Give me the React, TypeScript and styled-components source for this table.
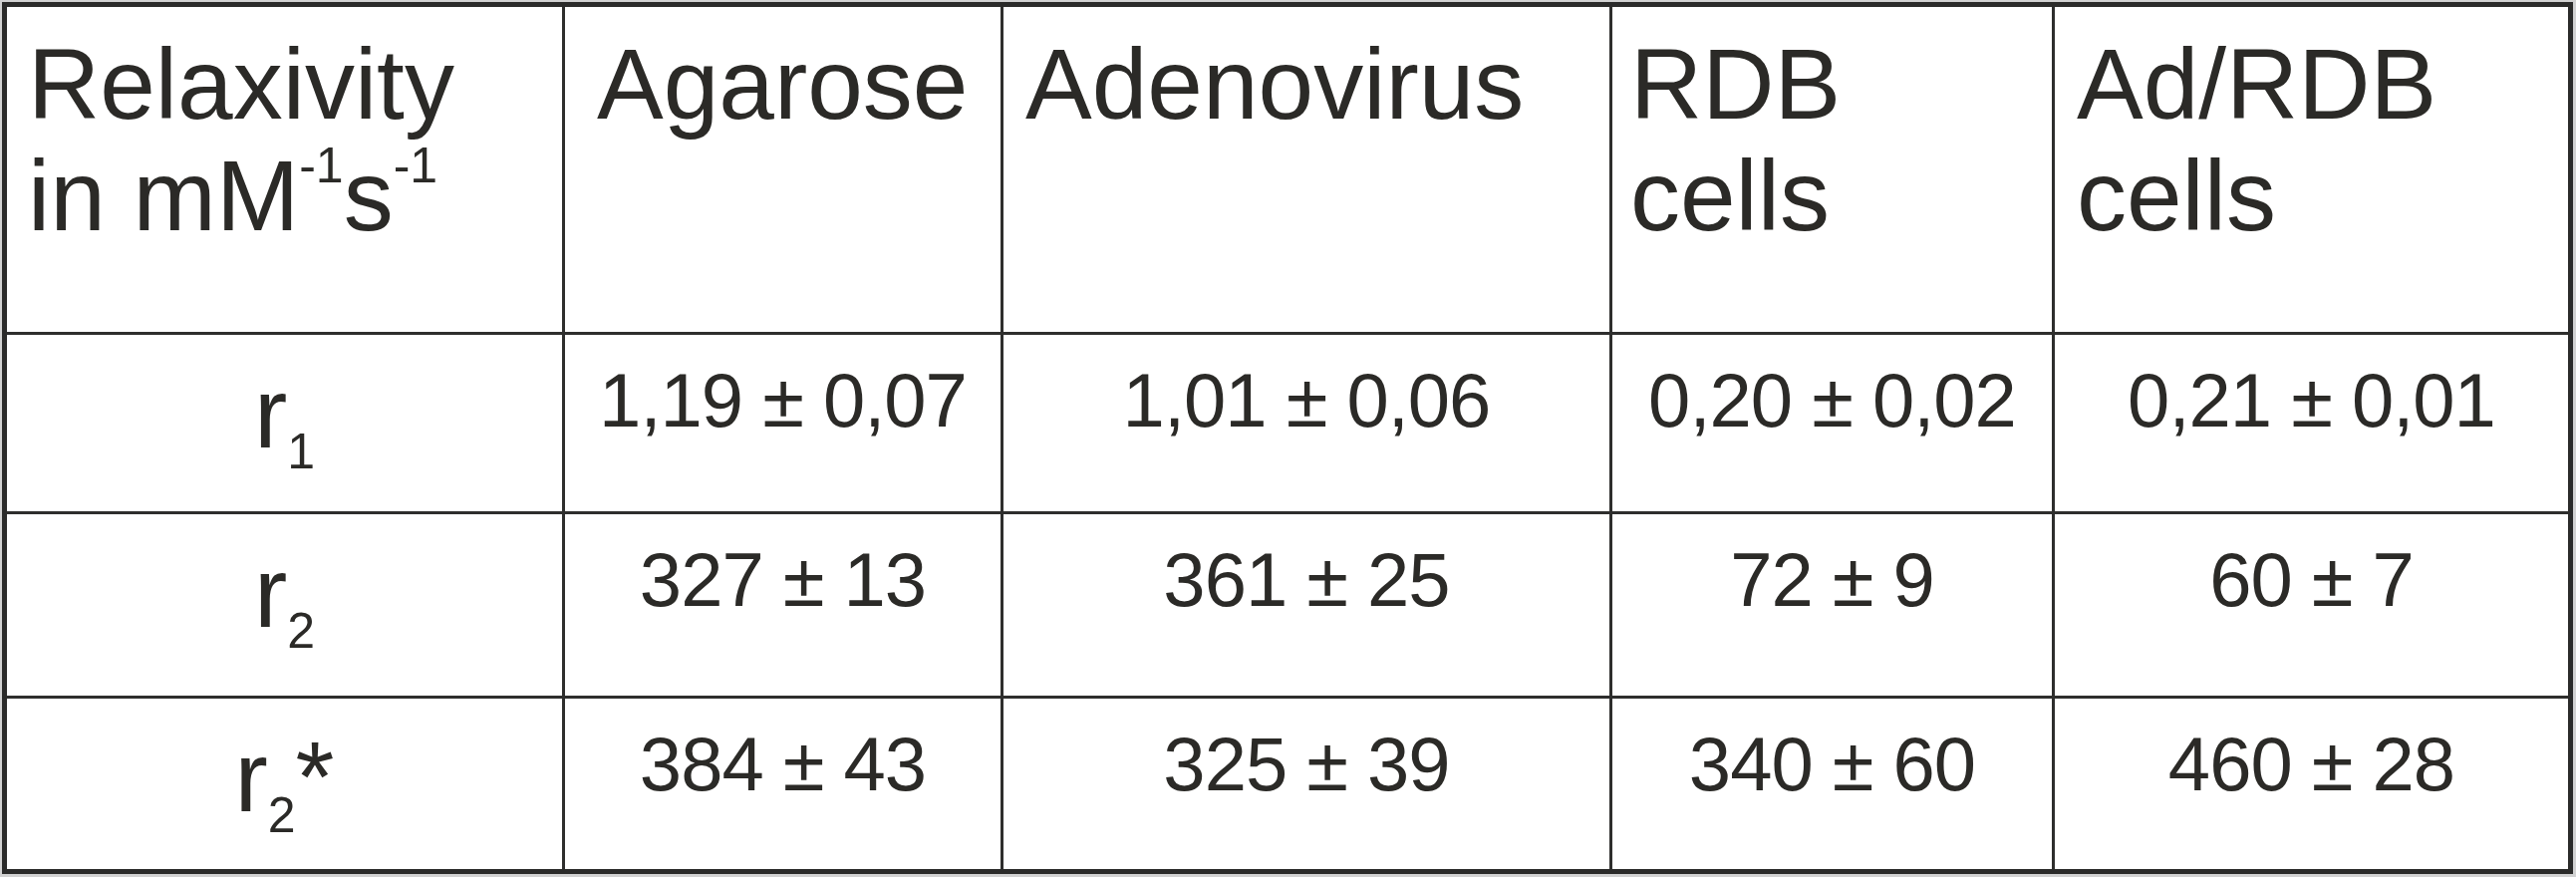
import React from "react";
import styled, { createGlobalStyle } from "styled-components";

const Global = createGlobalStyle`
  html, body {
    margin: 0;
    padding: 0;
    background: #d2d2d2;
  }
  body {
    padding: 2px;
    font-family: "Liberation Sans", Arial, sans-serif;
    color: #2b2a27;
  }
`;

const Table = styled.div`
  display: grid;
  grid-template-columns: 557px 437px 608px 441px 515px;
  grid-template-rows: 326px 177px 182px 171px;
  gap: 3px;
  width: max-content;
  background: #2e2e2d;
  border: 5px solid #2b2b2a;
`;

const Cell = styled.div`
  background: #ffffff;
  overflow: hidden;
`;

const HeaderCell = styled(Cell)<{ $pad: number }>`
  padding: 21px 0 0 ${(p) => p.$pad}px;
  font-size: 100px;
  line-height: 112px;
  white-space: nowrap;
`;

const LabelCell = styled(Cell)`
  padding-top: 22px;
  text-align: center;
  font-size: 100px;
  line-height: 112px;
  white-space: nowrap;
`;

const ValueCell = styled(Cell)`
  padding-top: 22px;
  text-align: center;
  font-size: 76px;
  line-height: 87px;
  letter-spacing: -1px;
  white-space: nowrap;
`;

const Sup = styled.span`
  font-size: 50px;
  line-height: 0;
  vertical-align: 48px;
`;

const Sub = styled.span`
  font-size: 50px;
  line-height: 0;
  vertical-align: -21px;
`;

const headers: { pad: number; lines: React.ReactNode[] }[] = [
  {
    pad: 21,
    lines: [
      "Relaxivity",
      <>
        in mM<Sup>-1</Sup>s<Sup>-1</Sup>
      </>,
    ],
  },
  { pad: 32, lines: ["Agarose"] },
  { pad: 22, lines: ["Adenovirus"] },
  { pad: 18, lines: ["RDB", "cells"] },
  { pad: 22, lines: ["Ad/RDB", "cells"] },
];

const rows: { label: React.ReactNode; values: string[] }[] = [
  {
    label: (
      <>
        r<Sub>1</Sub>
      </>
    ),
    values: ["1,19 ± 0,07", "1,01 ± 0,06", "0,20 ± 0,02", "0,21 ± 0,01"],
  },
  {
    label: (
      <>
        r<Sub>2</Sub>
      </>
    ),
    values: ["327 ± 13", "361 ± 25", "72 ± 9", "60 ± 7"],
  },
  {
    label: (
      <>
        r<Sub>2</Sub>*
      </>
    ),
    values: ["384 ± 43", "325 ± 39", "340 ± 60", "460 ± 28"],
  },
];

export default function App() {
  return (
    <>
      <Global />
      <Table>
        {headers.map((h, i) => (
          <HeaderCell key={`h${i}`} $pad={h.pad}>
            {h.lines.map((l, j) => (
              <div key={j}>{l}</div>
            ))}
          </HeaderCell>
        ))}
        {rows.map((r, i) => (
          <React.Fragment key={`r${i}`}>
            <LabelCell>{r.label}</LabelCell>
            {r.values.map((v, j) => (
              <ValueCell key={j}>{v}</ValueCell>
            ))}
          </React.Fragment>
        ))}
      </Table>
    </>
  );
}
